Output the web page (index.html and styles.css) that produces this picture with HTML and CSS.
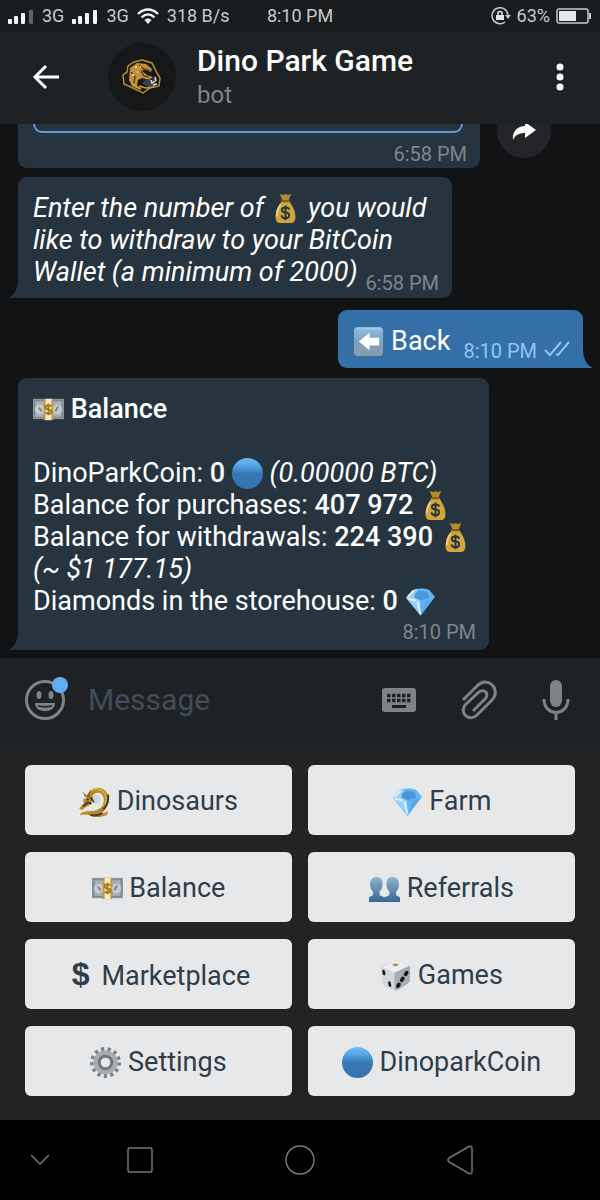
FILE: index.html
```html
<!DOCTYPE html>
<html lang="en">
<head>
  <meta charset="UTF-8" />
  <meta name="viewport" content="width=device-width, initial-scale=1.0"/>
  <title>Dino Park Game</title>
  <link rel="stylesheet" href="styles.css">
</head>
<body>

<!-- shared emoji -->
<svg class="sprite" aria-hidden="true">
  <defs>
    <linearGradient id="blueBall" x1="0" y1="0" x2="0" y2="1">
      <stop offset="0" stop-color="#6cbcf6"/>
      <stop offset="0.25" stop-color="#56a3e2"/>
      <stop offset="0.5" stop-color="#3878b4"/>
      <stop offset="1" stop-color="#3473ae"/>
    </linearGradient>
    <linearGradient id="backTile" x1="0" y1="0" x2="0" y2="1">
      <stop offset="0" stop-color="#8fbddf"/>
      <stop offset="0.5" stop-color="#7da3c2"/>
      <stop offset="1" stop-color="#8a9aa8"/>
    </linearGradient>
    <linearGradient id="people" x1="0" y1="0" x2="0" y2="1">
      <stop offset="0" stop-color="#8fb3cc"/>
      <stop offset="1" stop-color="#356896"/>
    </linearGradient>
  </defs>
  <symbol id="bag" viewBox="0 0 32 32">
    <path d="M10 1l4 1 2-1 2 1 4-1-3 7h-6z" fill="#b58a2b"/>
    <path d="M12 8h8c1 3 5 7 6 14 1 6-1 9-4 9H10c-3 0-5-3-4-9C7 15 11 11 12 8z" fill="#d0a63a"/>
    <path d="M11 12c-3 4-4 8-4 12" fill="none" stroke="#f0d070" stroke-width="2"/>
    <path d="M12 8.500h8" stroke="#755b24" stroke-width="2"/>
    <path d="M20 17c-1-2-3-2-4-2-5 0-5 5 0 5s5 6 0 6c-2 0-4-1-4-3M16 13v15" fill="none" stroke="#28323a" stroke-width="2"/>
  </symbol>
  <symbol id="cash" viewBox="0 0 32 32">
    <path d="M0 5h32v21H0z" fill="#8b959d"/>
    <path d="M2 7h28v17H2z" fill="#a9b1b8" stroke="#6c7780" stroke-dasharray="2 1"/>
    <circle cx="7" cy="16" r="5" fill="#c6ccd0"/>
    <circle cx="25" cy="16" r="5" fill="#c6ccd0"/>
    <path d="M6 14l3 4M26 13l-3 5" stroke="#7c868e" stroke-width="2"/>
    <path d="M11 5h10v22H11z" fill="#c59a35"/>
    <path d="M13 5h6v22h-6z" fill="#f2e9cf"/>
    <path d="M19 13c-1-2-6-2-6 1s6 1 6 4-5 3-6 1M16 10v12" fill="none" stroke="#a67b1c" stroke-width="2"/>
  </symbol>
  <symbol id="ball" viewBox="0 0 32 32">
    <circle cx="16" cy="16" r="16" fill="url(#blueBall)"/>
  </symbol>
  <symbol id="gem" viewBox="0 0 32 32">
    <path d="M1 12L8 4c6-2 12-2 17 0l6 7-15 20z" fill="#62b4f3"/>
    <path d="M1 12L8 4l5-1-3 8 6 3-1 14z" fill="#9ad0f7"/>
    <path d="M3 11l6-6M3 13l8 2M13 16l3 13" stroke="#e2f3fd" stroke-width="2" fill="none"/>
    <path d="M10 8l5-3 8 1 2 6-9 3-6-3z" fill="#4c97d6"/>
    <path d="M17 29l12-16-8 3z" fill="#55a8ea"/>
  </symbol>
  <symbol id="back" viewBox="0 0 32 32">
    <rect x="1" y="1" width="30" height="30" rx="4" fill="url(#backTile)"/>
    <path d="M3 3h26" stroke="#b5d3e8"/>
    <path d="M6 16l11-9v5h10v8H17v5z" fill="#fff"/>
  </symbol>
  <symbol id="dragon" viewBox="0 0 32 32">
    <path d="M8 12C9 5 15 1 21 2c8 1 11 9 9 16-1 5-4 8-7 10l5-1 2-2-1 5c-6 2-11 3-16 1-4-2-8-2-12-1 1-3 5-4 9-4 6 0 9-1 13-4 3-4 4-10 0-14-3-2-7-1-9 2l2 4-3 2-1 3-5 3-4 3-3-2 5-5-1-4z" fill="#b98a2a"/>
    <path d="M11 6c4-4 11-4 15 1 3 5 2 11-1 14" fill="none" stroke="#e0bc48" stroke-width="2" stroke-dasharray="2 1"/>
    <path d="M30 9c1 7-2 12-5 15M4 21l5-4 4 1M12 12l4 5M12 30c5 1 9 0 12-2" fill="none" stroke="#3e3c30" stroke-width="2"/>
    <path d="M6 11L4 6l4 4 4-6-1 8zM23 25l2-2 1 3" fill="#8b6b24"/>
    <path d="M14 12c1-4 5-4 7-1 2 4-1 8-4 8z" fill="#cfd8dc"/>
    <circle cx="9" cy="14" r="1" fill="#1d252b"/>
  </symbol>
  <symbol id="busts" viewBox="0 0 32 32">
    <path d="M8 4c4 0 6 3 6 7s-1 6-3 8v4l5 2 5-2v-4c-2-2-3-4-3-8s2-7 6-7 7 3 7 7-1 6-3 8v4l4 2v5H0v-5l4-2v-4c-2-2-3-4-3-8s3-7 7-7z" fill="url(#people)"/>
  </symbol>
  <symbol id="die" viewBox="0 0 32 32">
    <path d="M1 7q0-2 2-2l10-3q3-1 6 0l10 3q2 1 2 3v12q0 2-2 4l-9 6q-3 2-6 1l-8-3q-3-2-4-6z" fill="#d3d7da"/>
    <path d="M15 13L31 6v14q0 2-2 4l-9 6q-3 2-5 1z" fill="#a7acb2"/>
    <path d="M2 7l11-5q3-1 6 0l11 4-15 7z" fill="#eceeef"/>
    <ellipse cx="16" cy="5" rx="3" ry="1.500" fill="#b98e2c"/>
    <ellipse cx="4" cy="13" rx="1.500" ry="3" fill="#15191d" transform="rotate(-15 4 13)"/>
    <ellipse cx="10" cy="25" rx="1.500" ry="3" fill="#15191d" transform="rotate(-15 10 25)"/>
    <ellipse cx="27" cy="14" rx="2" ry="3" fill="#15191d" transform="rotate(30 27 14)"/>
    <ellipse cx="23" cy="20" rx="2" ry="3" fill="#15191d" transform="rotate(30 23 20)"/>
    <ellipse cx="19" cy="26" rx="2" ry="3" fill="#15191d" transform="rotate(30 19 26)"/>
  </symbol>
  <symbol id="gear" viewBox="0 0 32 32">
    <circle cx="16" cy="16" r="13.500" fill="none" stroke="#7e8388" stroke-width="5" stroke-dasharray="3.200 3.325"/>
    <circle cx="16" cy="16" r="9" fill="none" stroke="#a9acaf" stroke-width="7"/>
    <circle cx="16" cy="16" r="6.500" fill="none" stroke="#70767b" stroke-width="3"/>
    <circle cx="16" cy="16" r="4.500" fill="#e6e8ea"/>
  </symbol>
</svg>

<div class="status-bar">
  <div class="status-group">
    <svg class="signal" viewBox="0 0 26 15"><rect y="10" width="4" height="5" rx="1"/><rect x="6" y="7" width="4" height="8" rx="1"/><rect x="13" y="4" width="4" height="11" rx="1"/><rect x="21" y="1" width="4" height="14" rx="1" fill="#5b6670"/></svg>
    <span>3G</span>
    <svg class="signal" viewBox="0 0 26 15"><rect y="10" width="4" height="5" rx="1"/><rect x="6" y="7" width="4" height="8" rx="1"/><rect x="13" y="4" width="4" height="11" rx="1"/><rect x="21" y="1" width="4" height="14" rx="1"/></svg>
    <span>3G</span>
    <svg class="wifi" viewBox="0 0 22 16"><g fill="none" stroke="#f2f4f5" stroke-width="2.400"><path d="M1 6c6-6 14-6 20 0M4.500 9.500c4-4 9-4 13 0"/></g><path d="M7.500 12c2-2 5-2 7 0L11 16z" fill="#f2f4f5"/></svg>
    <span>318 B/s</span>
  </div>
  <span>8:10 PM</span>
  <div class="status-group status-right">
    <svg class="lock" viewBox="0 0 20 18"><path d="M14 15a8 8 0 1 1 3-7" fill="none" stroke="#c6cacd" stroke-width="1.500"/><path d="M14 8h6l-3 4z" fill="#c6cacd"/><rect x="5" y="8" width="8" height="5" fill="#e3e6e8"/><path d="M7 8V6c0-2 4-2 4 0v2" fill="none" stroke="#e3e6e8" stroke-width="1.500"/></svg>
    <span>63%</span>
    <svg class="battery" viewBox="0 0 36 16"><rect x="1" y="1" width="31" height="14" rx="2" fill="none" stroke="#c6cacd" stroke-width="1.500"/><rect x="3" y="3" width="17" height="10" fill="#e6e8e9"/><path d="M33 5h2v6h-2z" fill="#c6cacd"/></svg>
  </div>
</div>

<header class="header">
  <button class="icon-btn" aria-label="Go back">
    <svg width="28" height="26" viewBox="0 0 28 26"><path d="M27 13H3M14 2L3 13l11 11" fill="none" stroke="#fff" stroke-width="3"/></svg>
  </button>
  <div class="avatar">
    <svg width="40" height="36" viewBox="0 0 40 36">
      <path d="M12 3l8-2 10 3 5 10 3 5-1 8-9 2-7 5-10-5-9-4-1-9 4-3 1-6z" fill="#17191a" stroke="#b8902d" stroke-width="1.500"/>
      <path d="M8 9l7-5 9 1 6 5-1 3-6-3-3 2 5 4 6 2-4 3-7-2-4 2-1 6 3 4-8-4-3-6z" fill="#c2913a"/>
      <path d="M17 6l5 4 6 2M9 13l4 5-1 6M19 12l3 5 5 1" fill="none" stroke="#5e451c" stroke-width="1.500"/>
      <path d="M20 24l5-4 5 1 2-3 3 3-2 6-6 1z" fill="#3b414b"/>
      <path d="M29 21l1 3 3-2M31 26l4-1M33 18l1 4" fill="none" stroke="#d9dee4" stroke-width="1.500"/>
      <path d="M17 27l7 2 8-1M10 25l9 5" fill="none" stroke="#c9a13c" stroke-width="1.500"/>
      <path d="M13 8h2M18 8h1M10 16h2M15 13h1" stroke="#f0d488" stroke-width="2"/>
    </svg>
  </div>
  <div class="chat-info">
    <h1>Dino Park Game</h1>
    <p>bot</p>
  </div>
  <button class="icon-btn" aria-label="More options">
    <svg width="8" height="28" viewBox="0 0 8 28"><g fill="#fff"><circle cx="4" cy="4" r="3.500"/><circle cx="4" cy="14" r="3.500"/><circle cx="4" cy="24" r="3.500"/></g></svg>
  </button>
</header>

<main class="chat">
  <div class="message-row">
    <div class="bubble bubble-media">
      <div class="preview"></div>
      <time>6:58 PM</time>
    </div>
    <button class="share" aria-label="Share">
      <svg width="24" height="20" viewBox="0 0 24 20"><path d="M13 1l11 8-11 8v-5C7 12 3 14 1 19 0 11 5 5 13 5z" fill="#fff"/></svg>
    </button>
  </div>

  <div class="bubble bubble-in bubble-withdraw">
    <em>Enter the number of <svg class="emoji"><use href="#bag"/></svg> you would<br>
    like to withdraw to your BitCoin<br>
    Wallet (a minimum of 2000)</em>
    <time>6:58 PM</time>
  </div>

  <div class="bubble bubble-out">
    <span><svg class="emoji"><use href="#back"/></svg> Back</span>
    <time>8:10 PM</time>
    <svg class="checks" viewBox="0 0 26 16"><path d="M1 9l5 5L17 1M12 13l2 1L25 1" fill="none" stroke="#8fc6f2" stroke-width="2"/></svg>
  </div>

  <div class="bubble bubble-in bubble-balance">
    <p><svg class="emoji"><use href="#cash"/></svg> <b>Balance</b></p>
    <br>
    <p>DinoParkCoin: <b>0</b> <svg class="emoji"><use href="#ball"/></svg> <em>(0.00000 BTC)</em></p>
    <p>Balance for purchases: <b>407 972</b> <svg class="emoji"><use href="#bag"/></svg></p>
    <p>Balance for withdrawals: <b>224 390</b> <svg class="emoji"><use href="#bag"/></svg></p>
    <p><em>(~ $1 177.15)</em></p>
    <p>Diamonds in the storehouse: <b>0</b> <svg class="emoji"><use href="#gem"/></svg></p>
    <time>8:10 PM</time>
  </div>
</main>

<div class="composer">
  <button class="icon-btn smiley" aria-label="Emoji">
    <svg width="40" height="40" viewBox="0 0 40 40">
      <circle cx="20" cy="20" r="18.500" fill="none" stroke="#7d8389" stroke-width="3"/>
      <ellipse cx="14" cy="15" rx="2.500" ry="4" fill="#7d8389"/>
      <ellipse cx="26" cy="15" rx="2.500" ry="4" fill="#7d8389"/>
      <path d="M10 23h20c0 11-20 11-20 0z" fill="#7d8389"/>
      <path d="M13 26c5 1 9 1 14 0" fill="none" stroke="#1e2124" stroke-width="1.500"/>
    </svg>
    <span class="dot"></span>
  </button>
  <input type="text" placeholder="Message" aria-label="Message">
  <button class="icon-btn" aria-label="Keyboard">
    <svg width="34" height="24" viewBox="0 0 34 24">
      <rect width="34" height="24" rx="3" fill="#7d8389"/>
      <path d="M5 7.500h25M5 12.500h25" stroke="#1e2124" stroke-width="3.500" stroke-dasharray="3.500 1.500"/>
      <path d="M10 18.500h14" stroke="#1e2124" stroke-width="3"/>
    </svg>
  </button>
  <button class="icon-btn" aria-label="Attach">
    <svg width="36" height="40" viewBox="0 0 36 40"><path d="M2 20L16 6c10-11 25 3 15 14L16 35C8 43-3 32 5 24L18 12c5-4 11 2 6 7L12 31" fill="none" stroke="#7d8389" stroke-width="3"/></svg>
  </button>
  <button class="icon-btn" aria-label="Voice message">
    <svg width="28" height="40" viewBox="0 0 28 40"><rect x="8" y="0" width="12" height="27" rx="6" fill="#7d8389"/><path d="M2 19c0 18 24 18 24 0M14 33v7" fill="none" stroke="#7d8389" stroke-width="3"/></svg>
  </button>
</div>

<div class="keyboard">
  <button><svg class="emoji"><use href="#dragon"/></svg> Dinosaurs</button>
  <button><svg class="emoji"><use href="#gem"/></svg> Farm</button>
  <button><svg class="emoji"><use href="#cash"/></svg> Balance</button>
  <button><svg class="emoji"><use href="#busts"/></svg> Referrals</button>
  <button><span class="dollar">$</span> Marketplace</button>
  <button><svg class="emoji"><use href="#die"/></svg> Games</button>
  <button><svg class="emoji"><use href="#gear"/></svg> Settings</button>
  <button><svg class="emoji"><use href="#ball"/></svg> DinoparkCoin</button>
</div>

<nav class="nav-bar">
  <button class="nav-hide" aria-label="Hide"><svg width="20" height="12" viewBox="0 0 20 12"><path d="M1 1l9 9 9-9"/></svg></button>
  <button aria-label="Recent apps"><svg width="26" height="26" viewBox="0 0 26 26"><rect x="1" y="1" width="24" height="24" rx="2"/></svg></button>
  <button aria-label="Home"><svg width="30" height="30" viewBox="0 0 30 30"><circle cx="15" cy="15" r="14"/></svg></button>
  <button aria-label="Back"><svg width="26" height="30" viewBox="0 0 26 30"><path d="M2 13L22 1.500q3-1 3 2v23q0 3-3 2L2 17q-2-2 0-4z"/></svg></button>
</nav>

</body>
</html>
```

FILE: styles.css
```css
:root {
  --bar-color: #1e2225;
  --bubble-in: #263440;
  --bubble-out: #346fa8;
  --key-color: #e6e8ea;
  --key-text: #303d49;
  --muted: #7b8690;
}

* {
  box-sizing: border-box;
  margin: 0;
  padding: 0;
}

body {
  font-family: Roboto, 'Liberation Sans', sans-serif;
  font-size: 27px;
  line-height: 32px;
  color: #fff;
  background: #111315;
  height: 100vh;
  display: flex;
  flex-direction: column;
}

button {
  border: none;
  background: none;
  font: inherit;
  color: inherit;
  cursor: pointer;
}

svg {
  flex-shrink: 0;
}

.sprite {
  position: absolute;
  width: 0;
  height: 0;
}

.emoji {
  width: 31px;
  height: 31px;
  vertical-align: -6px;
  margin: -1px 0;
}

.icon-btn {
  display: flex;
  align-items: center;
  justify-content: center;
}

/* Status bar */
.status-bar {
  display: grid;
  grid-template-columns: 1fr auto 1fr;
  align-items: center;
  height: 32px;
  padding: 0 8px;
  background: #1a1d1f;
  color: #c6cacd;
  font-size: 18px;
}

.status-group {
  display: flex;
  align-items: center;
  gap: 8px;
}

.status-right {
  justify-content: flex-end;
  gap: 6px;
}

.signal {
  width: 26px;
  height: 15px;
  fill: #f2f4f5;
}

.wifi {
  width: 22px;
  height: 16px;
}

.lock {
  width: 20px;
  height: 18px;
}

.battery {
  width: 36px;
  height: 16px;
}

/* Header */
.header {
  position: relative;
  z-index: 1;
  display: flex;
  align-items: center;
  height: 92px;
  flex-shrink: 0;
  padding: 0 36px 2px 32px;
  background: var(--bar-color);
}

.avatar {
  display: flex;
  align-items: center;
  justify-content: center;
  width: 68px;
  height: 68px;
  margin: 0 21px 0 48px;
  border-radius: 50%;
  background: #151718;
}

.chat-info {
  flex: 1;
}

.chat-info h1 {
  font-size: 30px;
  font-weight: 500;
  line-height: 36px;
}

.chat-info p {
  font-size: 24px;
  color: var(--muted);
}

/* Messages */
.chat {
  flex: 1;
  min-height: 0;
  display: flex;
  flex-direction: column;
  justify-content: flex-end;
  padding: 0 17px 8px 18px;
  overflow: hidden;
}

.message-row {
  display: flex;
  align-items: flex-end;
  flex-shrink: 0;
  margin-bottom: 9px;
}

.bubble {
  position: relative;
  display: flow-root;
  flex-shrink: 0;
  width: 100%;
  padding: 15px 13px 4px 15px;
  border-radius: 9px;
  background: var(--bubble-in);
}

.bubble time {
  font-size: 20px;
  line-height: 22px;
  color: var(--muted);
}

.bubble-in {
  border-bottom-left-radius: 0;
}

/* bubble tails */
.bubble-in::before,
.bubble-out::before {
  content: '';
  position: absolute;
  bottom: 0;
  width: 10px;
  height: 20px;
}

.bubble-in::before {
  right: 100%;
  background: var(--bubble-in);
  clip-path: path('M10 0 C10 10 7 17 0 20 H10 Z');
}

.bubble-out::before {
  left: 100%;
  background: var(--bubble-out);
  clip-path: path('M0 0 C0 10 3 17 10 20 H0 Z');
}

.bubble-media {
  max-width: 462px;
  padding-bottom: 3px;
}

.bubble-media time {
  display: block;
  text-align: right;
}

.preview {
  height: 64px;
  margin: 0 4px 10px 0;
  border: 2px solid #5a9bd8;
  border-radius: 9px;
}

.share {
  display: flex;
  align-items: center;
  justify-content: center;
  width: 54px;
  height: 54px;
  margin: 0 0 10px 17px;
  border-radius: 50%;
  background: #232528;
}

.bubble-withdraw {
  max-width: 434px;
  margin-bottom: 12px;
}

.bubble-withdraw time {
  float: right;
  margin-top: 16px;
}

.bubble-out {
  display: flex;
  align-items: flex-end;
  align-self: flex-end;
  gap: 13px;
  width: auto;
  margin-bottom: 10px;
  padding-bottom: 11px;
  border-bottom-right-radius: 0;
  background: var(--bubble-out);
}

.bubble-out time {
  margin: 0 -6px -5px 0;
  color: #8fc6f2;
}

.checks {
  width: 26px;
  height: 16px;
}

.bubble-balance {
  max-width: 471px;
  padding-bottom: 7px;
}

.bubble-balance b {
  font-weight: 500;
}

.bubble-balance time {
  display: block;
  margin-top: 4px;
  text-align: right;
}

/* Composer */
.composer {
  display: flex;
  align-items: center;
  gap: 45px;
  height: 83px;
  flex-shrink: 0;
  padding: 0 30px 0 25px;
  background: var(--bar-color);
}

.smiley {
  position: relative;
  margin-right: -22px;
}

.dot {
  position: absolute;
  top: -3px;
  right: -3px;
  width: 16px;
  height: 16px;
  border-radius: 50%;
  background: #60aef0;
}

.composer input {
  flex: 1;
  min-width: 0;
  border: none;
  outline: none;
  background: none;
  font: inherit;
  font-size: 30px;
  color: #fff;
}

.composer input::placeholder {
  color: #414d59;
}

/* Reply keyboard */
.keyboard {
  display: grid;
  grid-template-columns: 1fr 1fr;
  gap: 17px 16px;
  flex-shrink: 0;
  padding: 24px 25px;
  background: #212325;
}

.keyboard button {
  height: 70px;
  padding-top: 2px;
  border-radius: 6px;
  background: var(--key-color);
  color: var(--key-text);
}

.dollar {
  display: inline-block;
  width: 28px;
  font-family: 'Liberation Sans', sans-serif;
  font-size: 32px;
  font-weight: 700;
}

/* System navigation */
.nav-bar {
  display: grid;
  grid-template-columns: 60px 1fr 1fr 1fr 60px;
  height: 80px;
  flex-shrink: 0;
  background: #000;
}

.nav-bar button {
  display: flex;
  align-items: center;
  justify-content: center;
}

.nav-bar .nav-hide {
  padding-left: 20px;
}

.nav-bar svg {
  fill: none;
  stroke: #6e7880;
  stroke-width: 1.5;
}
```
